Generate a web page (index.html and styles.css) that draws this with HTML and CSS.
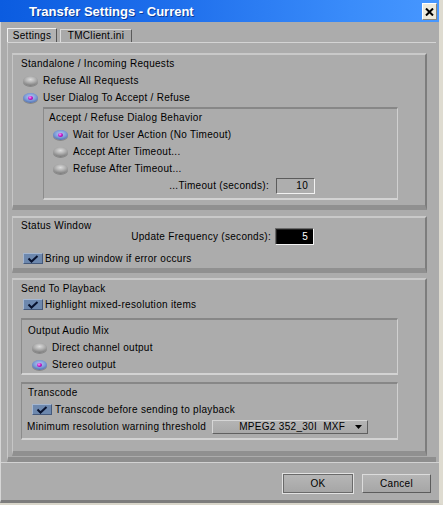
FILE: index.html
```html
<!DOCTYPE html>
<html>
<head>
<meta charset="utf-8">
<link rel="stylesheet" href="styles.css">
</head>
<body>
<div class="window">
  <div class="titlebar">
    <span class="title">Transfer Settings - Current</span>
    <span class="close"><svg width="9" height="8" viewBox="0 0 9 8"><path d="M1 0.5 L8 7.5 M8 0.5 L1 7.5" stroke="#000" stroke-width="2"/></svg></span>
  </div>
  <div class="client">
    <div class="top">
      <div class="tabs">
        <div class="tab active">Settings</div>
        <div class="tab">TMClient.ini</div>
      </div>
      <div class="panel">
        <div class="group g1">
          <div class="gtitle h17">Standalone / Incoming Requests</div>
          <div class="row rad1"><span class="radio"></span><span>Refuse All Requests</span></div>
          <div class="row rad1"><span class="radio on"></span><span>User Dialog To Accept / Refuse</span></div>
          <div class="inner in1">
            <div class="ititle h17">Accept / Refuse Dialog Behavior</div>
            <div class="row rad2"><span class="radio on"></span><span>Wait for User Action (No Timeout)</span></div>
            <div class="row rad2"><span class="radio"></span><span>Accept After Timeout...</span></div>
            <div class="row rad2"><span class="radio"></span><span>Refuse After Timeout...</span></div>
            <div class="row field-row timeout"><span>...Timeout (seconds):</span><span class="field">10</span></div>
          </div>
        </div>
        <div class="group g2">
          <div class="gtitle h14">Status Window</div>
          <div class="row field-row freq"><span>Update Frequency (seconds):</span><span class="field dark">5</span></div>
          <div class="row chk1 bring"><span class="check"><svg width="12" height="8" viewBox="0 0 12 8"><path d="M1.5 3.5 L4.5 6.5 L10.5 1" fill="none" stroke="#08122e" stroke-width="2"/></svg></span><span>Bring up window if error occurs</span></div>
        </div>
        <div class="group g3">
          <div class="gtitle h16">Send To Playback</div>
          <div class="row chk1"><span class="check"><svg width="12" height="8" viewBox="0 0 12 8"><path d="M1.5 3.5 L4.5 6.5 L10.5 1" fill="none" stroke="#08122e" stroke-width="2"/></svg></span><span>Highlight mixed-resolution items</span></div>
          <div class="inner in2">
            <div class="ititle h17">Output Audio Mix</div>
            <div class="row rad3"><span class="radio"></span><span>Direct channel output</span></div>
            <div class="row rad3"><span class="radio on"></span><span>Stereo output</span></div>
          </div>
          <div class="inner in3">
            <div class="ititle h17">Transcode</div>
            <div class="row chk2"><span class="check"><svg width="12" height="8" viewBox="0 0 12 8"><path d="M1.5 3.5 L4.5 6.5 L10.5 1" fill="none" stroke="#08122e" stroke-width="2"/></svg></span><span>Transcode before sending to playback</span></div>
            <div class="row minres"><span>Minimum resolution warning threshold</span><span class="select"><span class="sel-text">MPEG2 352_30I&nbsp; MXF</span><svg class="arrow" width="7" height="4" viewBox="0 0 7 4"><path d="M0 0 H7 L3.5 4 Z" fill="#000"/></svg></span></div>
          </div>
        </div>
      </div>
    </div>
    <div class="footer">
      <span class="btn ok"><span class="btn-in">OK</span></span>
      <span class="btn cancel">Cancel</span>
    </div>
  </div>
</div>
</body>
</html>
```
FILE: styles.css
```css
* { box-sizing: border-box; }
html, body { margin: 0; padding: 0; }
body {
  width: 443px;
  height: 505px;
  overflow: hidden;
  font-family: "Liberation Sans", Arial, sans-serif;
  font-size: 10px;
  letter-spacing: 0.3px;
  color: #000;
  background: #d9d6ca;
}
.window {
  width: 443px;
  height: 505px;
  display: flex;
  flex-direction: column;
  border-right: 4px solid #dedbd0;
  border-bottom: 2px solid #d9d6ca;
}
.titlebar {
  height: 22px;
  flex: none;
  display: flex;
  align-items: center;
  justify-content: space-between;
  background: linear-gradient(90deg, #0b5ce0 0%, #1f6fec 40%, #3a8cfa 80%, #4797ff 100%);
  padding-left: 29px;
  padding-right: 2px;
}
.title {
  color: #fff;
  font-weight: bold;
  font-size: 13px;
  letter-spacing: 0;
  text-shadow: 1px 1px 0 #0a3c9a;
}
.close {
  width: 15px;
  height: 17px;
  margin-top: 1px;
  background: #ece9dc;
  border: 1px solid;
  border-color: #ffffff #8a877c #8a877c #ffffff;
  display: flex;
  align-items: center;
  justify-content: center;
}
.client {
  flex: 1;
  display: flex;
  flex-direction: column;
  background: #acacac;
  border-left: 1px solid #d6d6d6;
  border-bottom: 3px solid #7c7c7c;
}
.top {
  padding: 6px 3px 0 6px;
}
.tabs {
  display: flex;
  gap: 3px;
  height: 14px;
  align-items: flex-end;
}
.tab {
  height: 13px;
  width: 72px;
  display: flex;
  align-items: center;
  justify-content: center;
  border-style: solid;
  border-width: 1px 1px 0 1px;
  border-color: #dcdcdc #5a5a5a #5a5a5a #dcdcdc;
  background: #a9a9a9;
  padding-bottom: 1px;
}
.tab.active {
  width: 50px;
  height: 14px;
  background: #b2b2b2;
  border-color: #f0f0f0 #555 #555 #f0f0f0;
}
.panel {
  border-top: 1px solid #d4d4d4;
  border-left: 1px solid #c8c8c8;
  border-bottom: 5px solid #8e8e8e;
  padding: 10px 9px 1px 4px;
}
.group {
  border-style: solid;
  border-width: 2px 2px 5px 1px;
  border-color: #c9c9c9 #7d7d7d #909090 #c6c6c6;
}
.g2 { margin-top: 6px; padding-bottom: 1px; }
.g3 { margin-top: 5px; padding-bottom: 11px; }
.inner {
  border-style: solid;
  border-width: 2px 1px 2px 1px;
  border-color: #878787 #d0d0d0 #d3d3d3 #8b8b8b;
}
.in1 { margin: 1px 27px 5px 30px; padding-bottom: 4px; }
.in2 { margin: 5px 27px 0 8px; padding-top: 2px; }
.in3 { margin: 7px 27px 0 8px; padding-bottom: 3px; }
.gtitle { padding-left: 8px; display: flex; align-items: center; }
.ititle { display: flex; align-items: center; }
.in1 .ititle { padding-left: 5px; }
.in2 .ititle, .in3 .ititle { padding-left: 6px; }
.h14 { height: 14px; }
.h16 { height: 16px; }
.h17 { height: 17px; }
.row {
  height: 17px;
  display: flex;
  align-items: center;
  white-space: nowrap;
}
.rad1 { padding-left: 10px; gap: 5px; }
.rad2 { padding-left: 9px; gap: 5px; }
.rad3 { padding-left: 10px; gap: 5px; }
.chk1 { padding-left: 10px; gap: 2px; }
.chk2 { padding-left: 10px; gap: 3px; }
.radio {
  flex: none;
  width: 15px;
  height: 10px;
  border-radius: 50%;
  background: radial-gradient(ellipse 70% 60% at 50% 35%, #dcdcdc 0%, #b4b4b4 45%, #7e7e7e 100%);
  box-shadow: 0 1px 0 rgba(110,110,110,0.6);
  position: relative;
}
.radio.on {
  background: radial-gradient(ellipse 75% 70% at 50% 40%, #b8cdf2 0%, #7d9cd8 50%, #3d5c9c 100%);
}
.radio.on::after {
  content: "";
  position: absolute;
  left: 5px;
  top: 3px;
  width: 5px;
  height: 4px;
  border-radius: 50%;
  background: radial-gradient(circle at 40% 35%, #ff9cff 0%, #c010c0 50%, #7a007a 100%);
}
.check {
  flex: none;
  width: 20px;
  height: 11px;
  background: #6d88ae;
  border: 1px solid;
  border-color: #a4b6d0 #45597a #45597a #a4b6d0;
  display: flex;
  align-items: center;
  justify-content: center;
}
.field-row {
  justify-content: flex-end;
  gap: 7px;
}
.timeout { padding-right: 82px; }
.freq { padding-right: 111px; margin-top: -4px; gap: 4px; }
.bring { margin-top: 5px; }
.field {
  width: 39px;
  height: 16px;
  border: 1px solid;
  border-color: #5c5c5c #f2f2f2 #f2f2f2 #5c5c5c;
  background: #aeaeae;
  display: flex;
  align-items: center;
  justify-content: flex-end;
  padding-right: 6px;
}
.field.dark {
  height: 17px;
  background: #000;
  color: #fff;
  border-color: #6a6a6a #f4f4f4 #f4f4f4 #6a6a6a;
  box-shadow: inset 1px 1px 0 #202020;
  padding-right: 5px;
}
.minres { padding-left: 5px; gap: 6px; }
.select {
  width: 156px;
  height: 14px;
  border: 1px solid;
  border-color: #d6d6d6 #606060 #606060 #d6d6d6;
  background: linear-gradient(#b4b4b4, #a8a8a8);
  display: flex;
  align-items: center;
  padding-left: 26px;
  padding-right: 5px;
}
.sel-text { flex: 1; }
.arrow { flex: none; }
.footer {
  flex: 1;
  border-top: 1px solid #d2d2d2;
  display: flex;
  justify-content: flex-end;
  align-items: flex-start;
  gap: 8px;
  padding: 10px 8px 0 0;
}
.btn {
  display: flex;
  align-items: center;
  justify-content: center;
}
.ok {
  width: 72px;
  height: 21px;
  border: 1px solid #e2e2e2;
}
.btn-in, .cancel {
  background: linear-gradient(#b6b6b6, #a6a6a6);
  border: 1px solid;
  border-color: #dcdcdc #5c5c5c #5c5c5c #dcdcdc;
  display: flex;
  align-items: center;
  justify-content: center;
}
.btn-in { width: 70px; height: 19px; border-color: #6a6a6a; }
.cancel { width: 69px; height: 19px; margin-top: 1px; }
```
